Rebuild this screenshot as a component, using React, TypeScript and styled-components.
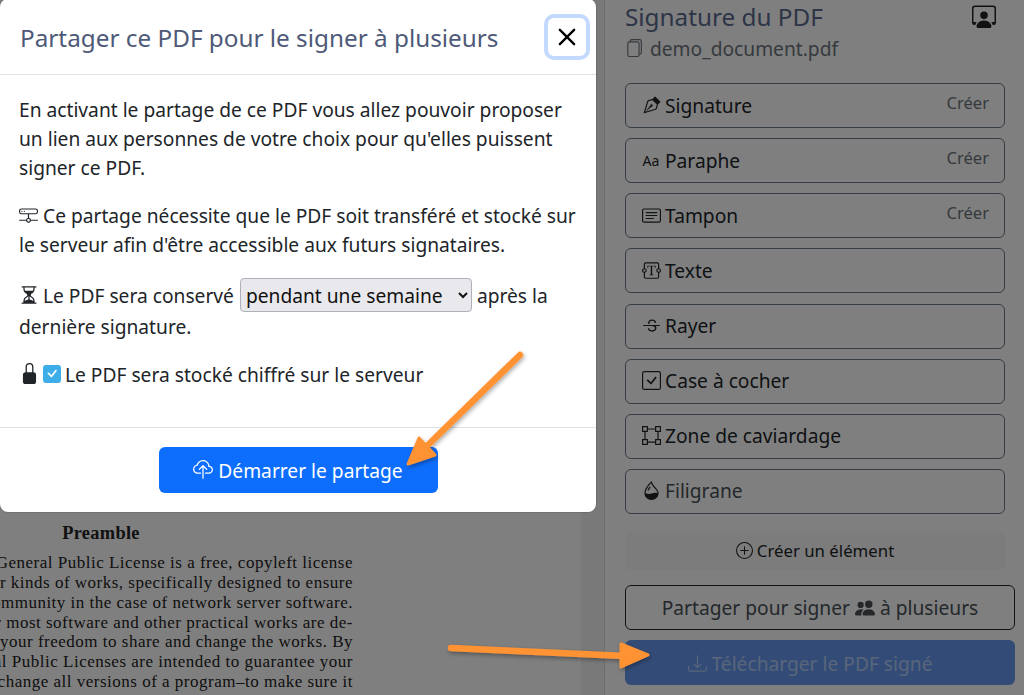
import React from "react";
import styled, { createGlobalStyle } from "styled-components";
import {
  BsVectorPen,
  BsCardText,
  BsTextareaT,
  BsTypeStrikethrough,
  BsCheckSquare,
  BsBoundingBox,
  BsDropletHalf,
  BsFiles,
  BsPersonWorkspace,
  BsPlusCircle,
  BsPeopleFill,
  BsDownload,
  BsCloudUpload,
  BsHddNetwork,
  BsHourglassSplit,
  BsLockFill,
  BsCheck,
  BsX,
} from "react-icons/bs";

const Global = createGlobalStyle`
  html, body { margin: 0; padding: 0; }
  body { font-family: "Noto Sans", sans-serif; background: #fff; }
  * { box-sizing: border-box; }
`;

const Screen = styled.div`
  position: relative;
  width: 1024px;
  height: 695px;
  overflow: hidden;
  display: flex;
  background: #fff;
`;

const Viewer = styled.main`
  width: 581px;
  flex: none;
  background: #fff;
  overflow: hidden;
  padding-top: 522px;
`;

const Gutter = styled.div`
  width: 24px;
  flex: none;
  background: #f2f2f2;
  border-right: 1px solid #dcdcdc;
`;

const PdfHeading = styled.h2`
  margin: 0 0 9px;
  width: 202px;
  text-align: center;
  font: bold 18.4px/22px "Liberation Serif", serif;
  letter-spacing: 0.3px;
  color: #222;
`;

const PdfText = styled.div`
  width: 353px;
  font: 17px/19.85px "Liberation Serif", serif;
  letter-spacing: 0.5px;
  color: #222;
`;

const PdfLine = styled.div`
  display: flex;
  justify-content: flex-end;
  white-space: nowrap;
`;

const Sidebar = styled.aside`
  flex: 1;
  padding: 0 9px 0 20px;
  display: flex;
  flex-direction: column;
  background: #fff;
`;

const SideHead = styled.div`
  display: flex;
  justify-content: space-between;
  align-items: flex-start;
  padding-right: 19px;
  height: 33px;
`;

const SideTitle = styled.h1`
  margin: 0;
  font-size: 24.3px;
  line-height: 33px;
  font-weight: 400;
  color: #5a6a8f;
`;

const SideProfile = styled.span`
  font-size: 24px;
  color: #222;
  line-height: 1;
  padding-top: 4px;
`;

const FileName = styled.div`
  display: flex;
  align-items: center;
  gap: 7px;
  height: 30px;
  font-size: 19.2px;
  color: #6c757d;
`;

const ToolList = styled.div`
  margin-top: 20px;
  width: 380px;
  display: flex;
  flex-direction: column;
  gap: 10.14px;
`;

const ToolButton = styled.div`
  height: 45px;
  border: 1.3px solid #6c7a89;
  border-radius: 6px;
  padding: 0 15px 1px 14px;
  display: flex;
  align-items: center;
  background: #fff;
  color: #212529;
  font-size: 19.2px;
`;

const ToolIcon = styled.span`
  width: 22px;
  height: 20px;
  margin-right: 3px;
  display: flex;
  align-items: center;
  justify-content: center;
  font-size: 19px;
  flex: none;
`;

const AaGlyph = styled.span`
  font-size: 14px;
  line-height: 20px;
  padding-top: 2px;
`;

const ToolLabel = styled.span<{ $muted?: boolean }>`
  flex: 1;
  color: ${(p) => (p.$muted ? "#495057" : "#212529")};
`;

const Create = styled.span`
  font-size: 16.6px;
  color: #6c757d;
  align-self: flex-start;
  padding-top: 7px;
`;

const NewElement = styled.div`
  margin-top: 19px;
  width: 380px;
  height: 37px;
  padding-bottom: 2px;
  border-radius: 5px;
  background: #f8f9fa;
  color: #212529;
  font-size: 16.8px;
  display: flex;
  align-items: center;
  justify-content: center;
  gap: 4px;
`;

const WideButton = styled.div<{ $primary?: boolean }>`
  width: 390px;
  height: 45px;
  border-radius: 6px;
  display: flex;
  align-items: center;
  justify-content: center;
  gap: 5px;
  font-size: 19.2px;
  background: ${(p) => (p.$primary ? "#6698ee" : "#fff")};
  color: ${(p) => (p.$primary ? "#b2cbf6" : "#495057")};
  border: ${(p) => (p.$primary ? "none" : "1.3px solid #212529")};
  margin-top: ${(p) => (p.$primary ? "10px" : "15px")};
  padding: ${(p) => (p.$primary ? "2px 20px 0 0" : "1px 0 0")};
`;

const Backdrop = styled.div`
  position: absolute;
  inset: 0;
  background: rgba(0, 0, 0, 0.5);
`;

const Modal = styled.section`
  position: absolute;
  left: 0;
  top: -1px;
  width: 596px;
  height: 513px;
  background: #fff;
  border-radius: 8px;
  display: flex;
  flex-direction: column;
  box-shadow: 0 0 0 1px rgba(0, 0, 0, 0.1);
`;

const ModalHeader = styled.header`
  height: 76px;
  flex: none;
  border-bottom: 1px solid #dee2e6;
  padding: 0 10px 0 20px;
  display: flex;
  align-items: center;
  justify-content: space-between;
`;

const ModalTitle = styled.h3`
  margin: 0;
  font-size: 24.3px;
  line-height: 36px;
  font-weight: 400;
  color: #4e5a78;
  padding-top: 2px;
`;

const CloseButton = styled.button`
  width: 38px;
  height: 38px;
  padding: 0;
  border: none;
  border-radius: 6px;
  background: #fff;
  color: #000;
  box-shadow: 0 0 0 4px #c3d9fd;
  display: flex;
  align-items: center;
  justify-content: center;
  font-size: 46px;
`;

const ModalBody = styled.div`
  flex: 1;
  padding: 20px 15px 0 19px;
  color: #212529;
  font-size: 19.2px;
  line-height: 29px;
`;

const Para = styled.p`
  margin: 0 0 19px;
`;

const InlineIcon = styled.span<{ $size?: number; $gap?: number }>`
  display: inline-block;
  vertical-align: -2px;
  font-size: ${(p) => p.$size ?? 19}px;
  line-height: 1;
  margin-right: ${(p) => p.$gap ?? 5}px;
`;

const Keep = styled.select`
  font-family: "Noto Sans", sans-serif;
  font-size: 19.2px;
  height: 34px;
  width: 232px;
  padding: 0 1px;
  margin: 0 0 0 1px;
  color: #111;
  background-color: #e9e9ed;
  border: 1px solid #b0b0ba;
  border-radius: 4px;
`;

const CheckBox = styled.span`
  display: inline-flex;
  align-items: center;
  justify-content: center;
  width: 18px;
  height: 18px;
  border-radius: 3px;
  background: #3daee9;
  color: #fff;
  font-size: 21px;
  vertical-align: -2px;
  margin-right: 4px;
`;

const ModalFooter = styled.footer`
  height: 85px;
  flex: none;
  border-top: 1px solid #dee2e6;
  display: flex;
  justify-content: center;
  padding-top: 19px;
`;

const StartButton = styled.button`
  width: 279px;
  height: 46px;
  border: none;
  border-radius: 6px;
  background: #0d6efd;
  color: #fff;
  font-family: "Noto Sans", sans-serif;
  font-size: 19.2px;
  display: flex;
  align-items: center;
  justify-content: center;
  gap: 5px;
`;

const Arrow = styled.svg`
  position: absolute;
  left: 0;
  top: 0;
  width: 1024px;
  height: 695px;
  pointer-events: none;
`;

const tools = [
  { icon: <BsVectorPen />, label: "Signature", create: true },
  { icon: <AaGlyph>Aa</AaGlyph>, label: "Paraphe", create: true },
  { icon: <BsCardText />, label: "Tampon", create: true },
  { icon: <BsTextareaT />, label: "Texte" },
  { icon: <BsTypeStrikethrough />, label: "Rayer" },
  { icon: <BsCheckSquare />, label: "Case à cocher" },
  { icon: <BsBoundingBox />, label: "Zone de caviardage" },
  { icon: <BsDropletHalf />, label: "Filigrane", muted: true },
];

const pdfLines = [
  "The GNU Affero General Public License is a free, copyleft license",
  "for software and other kinds of works, specifically designed to ensure",
  "cooperation with the community in the case of network server software.",
  "The licenses for most software and other practical works are de-",
  "signed to take away your freedom to share and change the works. By",
  "contrast, our General Public Licenses are intended to guarantee your",
  "freedom to share and change all versions of a program–to make sure it",
];

const App = () => {
  return (
    <>
      <Global />
      <Screen>
        <Viewer>
          <PdfHeading>Preamble</PdfHeading>
          <PdfText>
            {pdfLines.map((line) => (
              <PdfLine key={line}>{line}</PdfLine>
            ))}
          </PdfText>
        </Viewer>
        <Gutter />
        <Sidebar>
          <SideHead>
            <SideTitle>Signature du PDF</SideTitle>
            <SideProfile>
              <BsPersonWorkspace />
            </SideProfile>
          </SideHead>
          <FileName>
            <BsFiles size={18} />
            demo_document.pdf
          </FileName>
          <ToolList>
            {tools.map((t) => (
              <ToolButton key={t.label}>
                <ToolIcon>{t.icon}</ToolIcon>
                <ToolLabel $muted={t.muted}>{t.label}</ToolLabel>
                {t.create && <Create>Créer</Create>}
              </ToolButton>
            ))}
          </ToolList>
          <NewElement>
            <BsPlusCircle size={17} />
            Créer un élément
          </NewElement>
          <WideButton>
            Partager pour signer <BsPeopleFill size={20} /> à plusieurs
          </WideButton>
          <WideButton $primary>
            <BsDownload size={19} />
            Télécharger le PDF signé
          </WideButton>
        </Sidebar>
        <Backdrop />
        <Modal>
          <ModalHeader>
            <ModalTitle>Partager ce PDF pour le signer à plusieurs</ModalTitle>
            <CloseButton aria-label="Fermer">
              <BsX />
            </CloseButton>
          </ModalHeader>
          <ModalBody>
            <Para>
              En activant le partage de ce PDF vous allez pouvoir proposer un
              lien aux personnes de votre choix pour qu'elles puissent signer ce
              PDF.
            </Para>
            <Para>
              <InlineIcon>
                <BsHddNetwork />
              </InlineIcon>
              Ce partage nécessite que le PDF soit transféré et stocké sur le
              serveur afin d'être accessible aux futurs signataires.
            </Para>
            <Para>
              <InlineIcon $size={20} $gap={4}>
                <BsHourglassSplit />
              </InlineIcon>
              Le PDF sera conservé{" "}
              <Keep defaultValue="week">
                <option value="week">pendant une semaine</option>
              </Keep>{" "}
              après la dernière signature.
            </Para>
            <Para>
              <InlineIcon $size={21} $gap={3}>
                <BsLockFill />
              </InlineIcon>
              <CheckBox>
                <BsCheck />
              </CheckBox>
              Le PDF sera stocké chiffré sur le serveur
            </Para>
          </ModalBody>
          <ModalFooter>
            <StartButton>
              <BsCloudUpload size={20} />
              Démarrer le partage
            </StartButton>
          </ModalFooter>
        </Modal>
        <Arrow viewBox="0 0 1024 695">
          <defs>
            <filter id="arrowShadow" x="-20%" y="-20%" width="140%" height="140%">
              <feDropShadow dx="1" dy="2" stdDeviation="2" floodColor="#000" floodOpacity="0.35" />
            </filter>
          </defs>
          <g filter="url(#arrowShadow)" fill="#ff9233" stroke="#ff9233" strokeLinecap="round" strokeLinejoin="round">
            <path d="M520 355 L426 447" strokeWidth="6.5" fill="none" />
            <path d="M408 464 L419 438 L435 455 Z" strokeWidth="3" />
            <path d="M451 648 L625 656" strokeWidth="6.5" fill="none" />
            <path d="M648 655 L621 644 L621 667 Z" strokeWidth="3" />
          </g>
        </Arrow>
      </Screen>
    </>
  );
};

export default App;
